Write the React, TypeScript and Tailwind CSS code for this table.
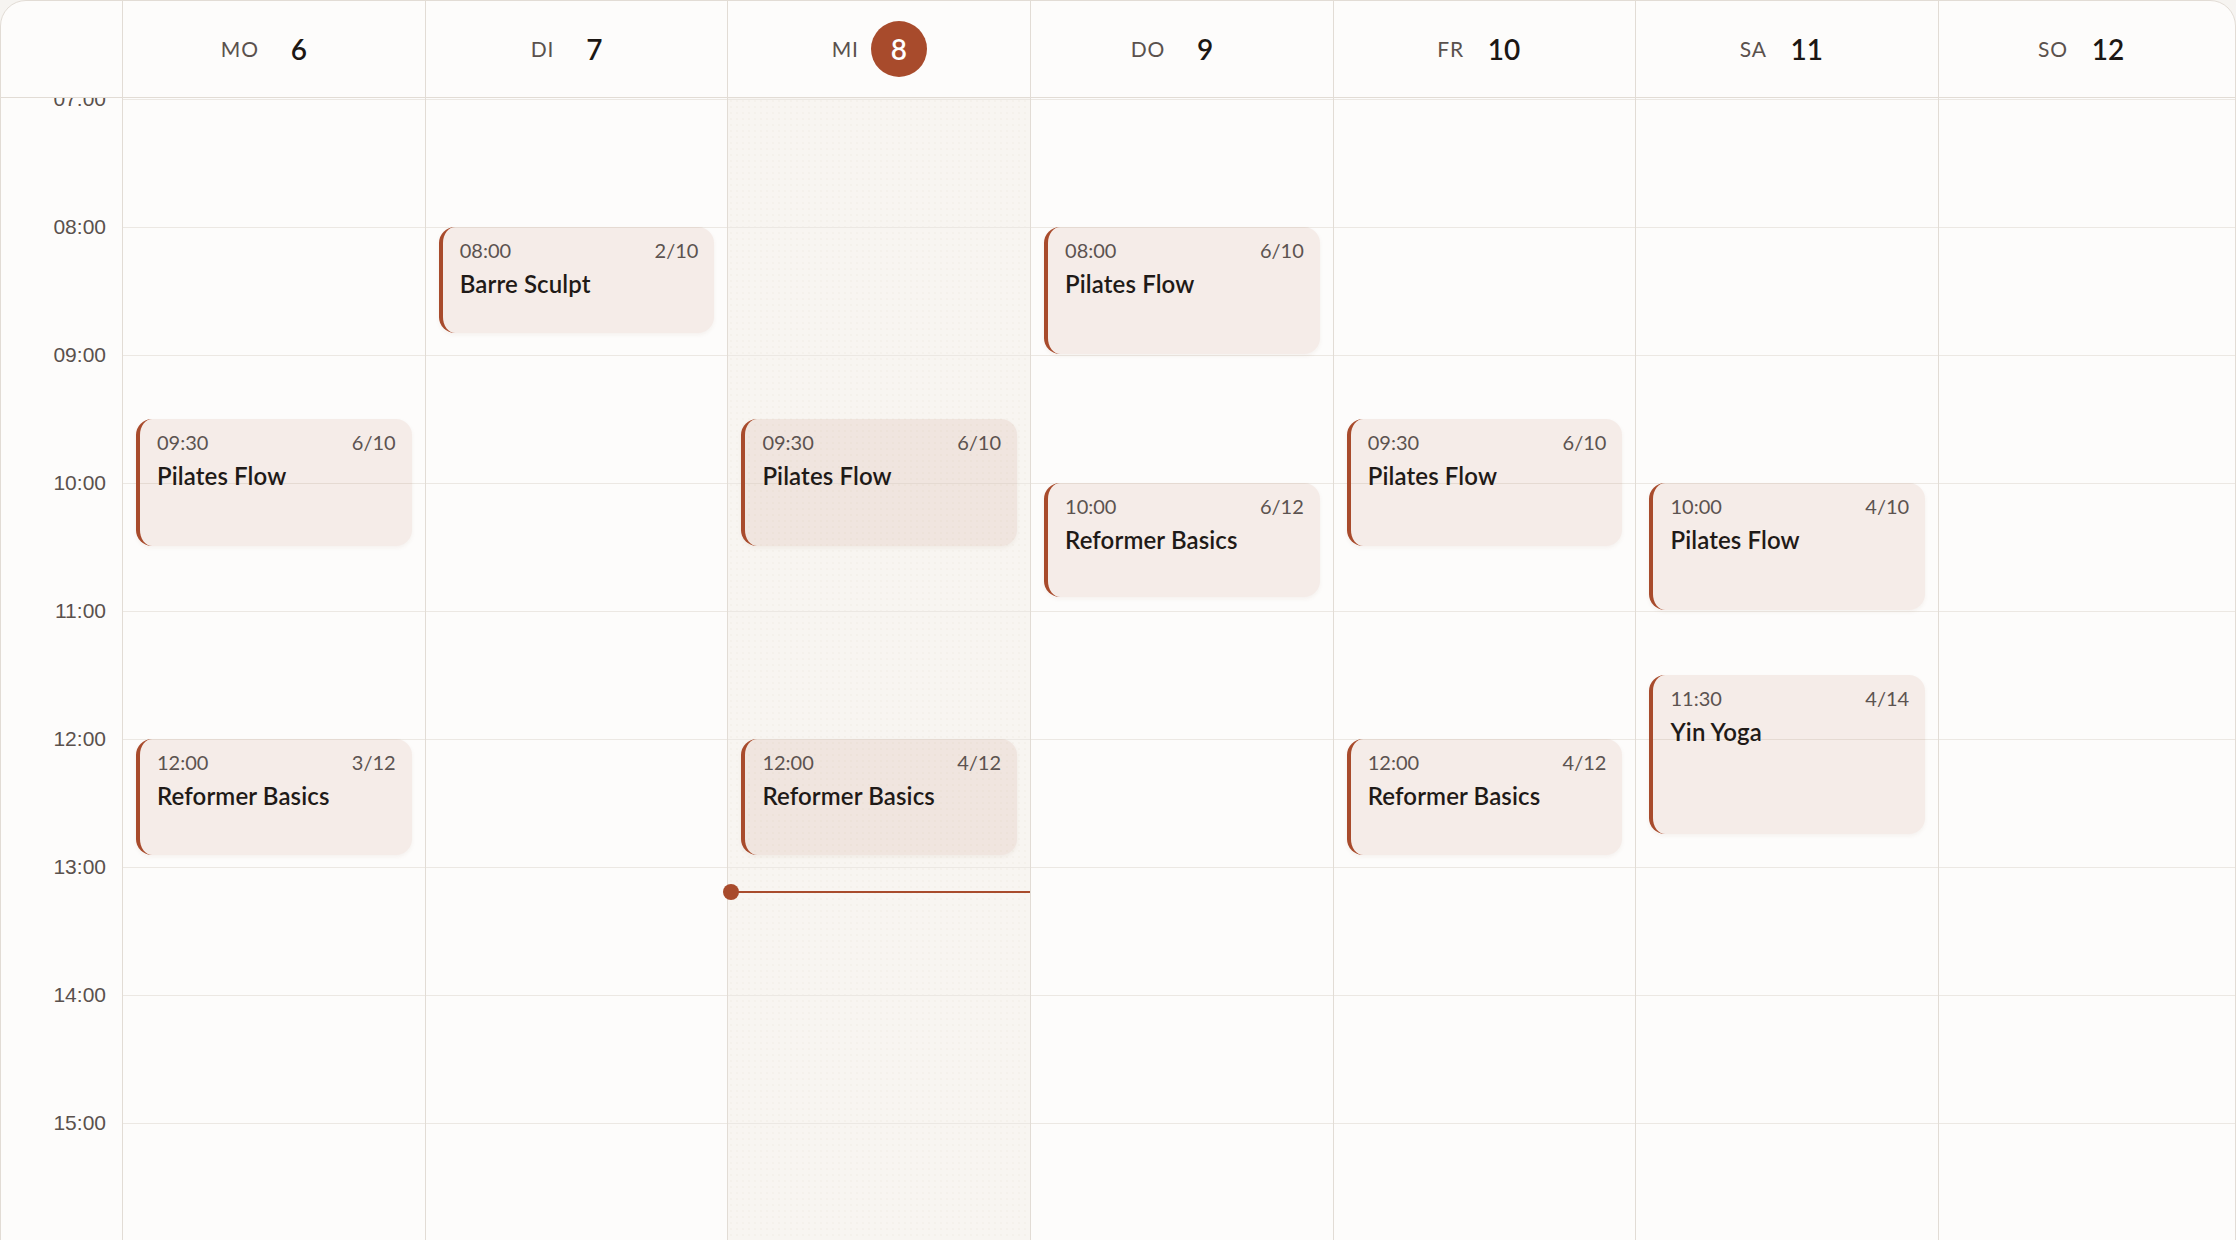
import React from "react";

const HOUR_H = 128;
const START = 7;

type Ev = { day: number; start: string; dur: number; cap: string; title: string };

const events: Ev[] = [
  { day: 0, start: "09:30", dur: 60, cap: "6/10", title: "Pilates Flow" },
  { day: 0, start: "12:00", dur: 55, cap: "3/12", title: "Reformer Basics" },
  { day: 1, start: "08:00", dur: 50, cap: "2/10", title: "Barre Sculpt" },
  { day: 2, start: "09:30", dur: 60, cap: "6/10", title: "Pilates Flow" },
  { day: 2, start: "12:00", dur: 55, cap: "4/12", title: "Reformer Basics" },
  { day: 3, start: "08:00", dur: 60, cap: "6/10", title: "Pilates Flow" },
  { day: 3, start: "10:00", dur: 54, cap: "6/12", title: "Reformer Basics" },
  { day: 4, start: "09:30", dur: 60, cap: "6/10", title: "Pilates Flow" },
  { day: 4, start: "12:00", dur: 55, cap: "4/12", title: "Reformer Basics" },
  { day: 5, start: "10:00", dur: 60, cap: "4/10", title: "Pilates Flow" },
  { day: 5, start: "11:30", dur: 75, cap: "4/14", title: "Yin Yoga" },
];

const days = [
  { l: "MO", n: 6 },
  { l: "DI", n: 7 },
  { l: "MI", n: 8, today: true },
  { l: "DO", n: 9 },
  { l: "FR", n: 10 },
  { l: "SA", n: 11 },
  { l: "SO", n: 12 },
];

const hours = [7, 8, 9, 10, 11, 12, 13, 14, 15, 16];

function toMin(t: string) {
  const [h, m] = t.split(":").map(Number);
  return h * 60 + m;
}

function EventCard({ ev }: { ev: Ev }) {
  const top = 1 + ((toMin(ev.start) - START * 60) / 60) * HOUR_H;
  const height = (ev.dur / 60) * HOUR_H - 1;
  return (
    <div
      className="absolute left-[13px] right-[13px] rounded-[16px] border-l-[4px] border-[#a84b2c] bg-[#a84b2c]/[0.09] pl-[17px] pr-[16px] pt-[9px] shadow-[0_2px_4px_rgba(120,60,40,0.06)]"
      style={{ top, height }}
    >
      <div className="flex items-center justify-between text-[20px] leading-[28px] text-[#5c5350]">
        <span>{ev.start}</span>
        <span>{ev.cap}</span>
      </div>
      <div className="mt-[4px] text-[24px] font-semibold leading-[32px] tracking-[0.005em] text-[#1f1a17]">
        {ev.title}
      </div>
    </div>
  );
}

export default function App() {
  return (
    <div
      className="h-[1240px] w-[2236px] overflow-hidden bg-[#f6f4f1]"
      style={{ fontFamily: "Lato, 'Noto Sans', sans-serif" }}
    >
      <div className="flex h-[1260px] w-full flex-col overflow-hidden rounded-t-[26px] border border-[#e2dcd5] bg-[#fdfcfb]">
        {/* Header */}
        <div className="grid h-[97px] shrink-0 grid-cols-[121px_repeat(6,302.7px)_1fr] border-b border-[#e2dcd5]">
          <div />
          {days.map((d) => (
            <div key={d.l} className="flex items-center justify-center gap-[12px] border-l border-[#e2dcd5]">
              <span className="text-[21px] tracking-[0.04em] text-[#5a514d]">{d.l}</span>
              {d.today ? (
                <span className="flex h-[56px] w-[56px] items-center justify-center rounded-full bg-[#a84b2c] text-[28px] font-semibold text-white">
                  {d.n}
                </span>
              ) : (
                <span className="flex h-[56px] w-[56px] items-center justify-center text-[28px] font-semibold text-[#1c1714]">
                  {d.n}
                </span>
              )}
            </div>
          ))}
        </div>
        {/* Body */}
        <div className="grid min-h-0 flex-1 grid-cols-[121px_repeat(6,302.7px)_1fr] overflow-hidden">
          <div className="pt-[1px]">
            {hours.map((h) => (
              <div key={h} className="relative h-[128px]">
                <span
                  className="absolute right-[16px] top-0 -translate-y-1/2 text-[21px] text-[#5a514d]"
                  style={{ fontFamily: "'Liberation Sans', Arial, sans-serif" }}
                >
                  {String(h).padStart(2, "0")}:00
                </span>
              </div>
            ))}
          </div>
          {days.map((d, i) => (
            <div
              key={d.l}
              className={
                "relative border-l border-[#e2dcd5] pt-[1px] " +
                (d.today
                  ? "bg-[#f8f5f1] bg-[radial-gradient(#f0ebe5_0.6px,transparent_0.8px)] bg-[length:6px_6px]"
                  : "")
              }
            >
              {hours.map((h) => (
                <div key={h} className="h-[128px] border-t border-[#ece8e3]" />
              ))}
              {events
                .filter((e) => e.day === i)
                .map((e, k) => (
                  <EventCard key={k} ev={e} />
                ))}
              {d.today && (
                <div className="absolute left-0 right-0 top-[793px] h-[2px] bg-[#a84b2c]">
                  <div className="absolute left-[-5px] top-[-7px] h-[16px] w-[16px] rounded-full bg-[#a84b2c]" />
                </div>
              )}
            </div>
          ))}
        </div>
      </div>
    </div>
  );
}
